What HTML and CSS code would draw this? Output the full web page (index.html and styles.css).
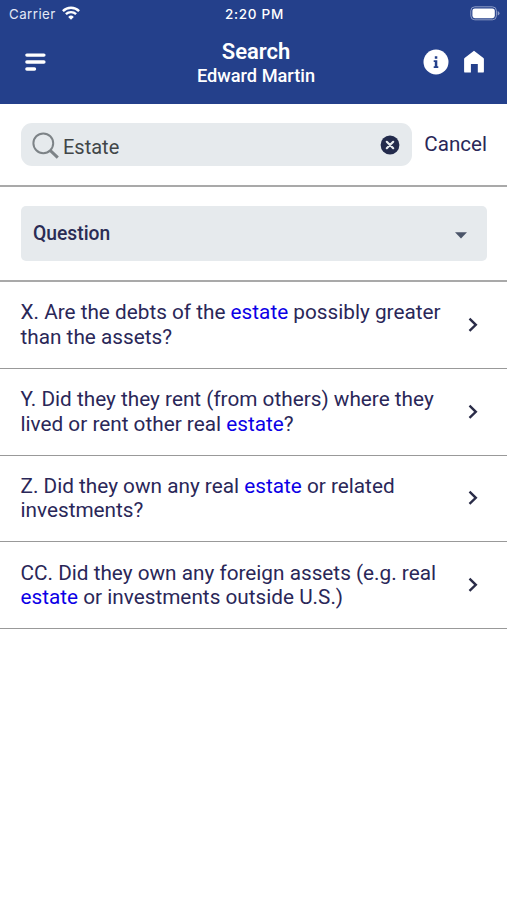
FILE: index.html
```html
<!DOCTYPE html>
<html lang="en">
<head>
<meta charset="utf-8">
<title>Search</title>
<link rel="stylesheet" href="styles.css">
</head>
<body>
<header class="header">
  <div class="status">
    <div class="carrier"><span>Carrier</span>
      <svg width="18" height="14" viewBox="0 0 18 14" fill="none" stroke="#fff" stroke-width="2.4"><path d="M.9 5.1a11.6 11.6 0 0 1 16.2 0"/><path d="M3.9 8.2a7.3 7.3 0 0 1 10.2 0"/><path d="M9 13.8 6.2 10.9a4 4 0 0 1 5.6 0z" fill="#fff" stroke="none"/></svg>
    </div>
    <div class="time">2:20 PM</div>
    <svg class="battery" width="31" height="15" viewBox="0 0 31 15"><rect x=".8" y=".8" width="25.6" height="13" rx="4" fill="none" stroke="#8e9cc7"/><rect x="2.4" y="2.4" width="22.4" height="9.8" rx="2.4" fill="#fff"/><path d="M27.7 5v4.6q1.8-.7 1.8-2.3T27.7 5z" fill="#8e9cc7"/></svg>
  </div>
  <div class="navbar">
    <svg width="21" height="18" viewBox="0 0 21 18" stroke="#fff" stroke-width="3.4" stroke-linecap="round"><path d="M1.9 2.1h17M1.9 9h17M1.9 16h7.6"/></svg>
    <div class="titles"><h1>Search</h1><p>Edward Martin</p></div>
    <div class="actions">
      <svg width="26" height="26" viewBox="0 0 26 26"><circle cx="13" cy="13" r="12.5" fill="#fff"/><path d="M11.8 7.2h2.5v2.5h-2.5zM10.7 11.3h3.6v6h1v1.6h-4.6v-1.6h1.1v-4.4h-1.1z" fill="#24408b"/></svg>
      <svg width="22" height="24" viewBox="0 0 22 24"><path d="M11 .8 20.4 8q.5.4.5 1v12.4q0 1.2-1.2 1.2h-4.9v-8.5H7.9v8.5H2.3q-1.2 0-1.2-1.2V9q0-.6.5-1z" fill="#fff"/></svg>
    </div>
  </div>
</header>
<main>
  <section class="search">
    <div class="field">
      <svg class="glass" width="28" height="28" viewBox="0 0 28 28" fill="none" stroke="#7d8387"><circle cx="11.3" cy="11.3" r="9.9" stroke-width="2"/><path d="m18.4 18.7 7.4 7" stroke-width="3"/></svg>
      <span class="query">Estate</span>
      <svg class="clear" width="20" height="20" viewBox="0 0 20 20"><circle cx="10" cy="10" r="9.4" fill="#232b4c"/><path d="m6.8 6.8 6.4 6.4m0-6.4-6.4 6.4" stroke="#e6eaed" stroke-width="2.2" stroke-linecap="round"/></svg>
    </div>
    <span class="cancel">Cancel</span>
  </section>
  <section class="filter">
    <div class="select"><span>Question</span><svg width="12" height="7" viewBox="0 0 12 7"><path d="M0 .3h12L6 6.5z" fill="#4b5569"/></svg></div>
  </section>
  <ul class="results">
    <li><p>X. Are the debts of the <mark>estate</mark> possibly greater<br>than the assets?</p><svg class="chevron" viewBox="0 0 10 16"><path d="m1.5 1.7 6.3 6.1-6.3 6.1"/></svg></li>
    <li><p>Y. Did they they rent (from others) where they<br>lived or rent other real <mark>estate</mark>?</p><svg class="chevron" viewBox="0 0 10 16"><path d="m1.5 1.7 6.3 6.1-6.3 6.1"/></svg></li>
    <li><p>Z. Did they own any real <mark>estate</mark> or related<br>investments?</p><svg class="chevron" viewBox="0 0 10 16"><path d="m1.5 1.7 6.3 6.1-6.3 6.1"/></svg></li>
    <li><p>CC. Did they own any foreign assets (e.g. real<br><mark>estate</mark> or investments outside U.S.)</p><svg class="chevron" viewBox="0 0 10 16"><path d="m1.5 1.7 6.3 6.1-6.3 6.1"/></svg></li>
  </ul>
</main>
</body>
</html>
```
FILE: styles.css
```css
* { box-sizing: border-box; margin: 0; padding: 0; }
body { width: 507px; min-height: 900px; background: #fff; color: #2a2758; font-family: Roboto, sans-serif; }
svg { display: block; flex: none; }
.header { height: 103.5px; background: #24408b; color: #fff; }
.status { height: 27px; display: grid; grid-template-columns: 1fr auto 1fr; align-items: center; padding: 0 7px 0 9px; font-family: Inter, sans-serif; font-size: 13.3px; }
.carrier { display: flex; align-items: center; gap: 6px; letter-spacing: .45px; color: #e3e8f6; }
.carrier svg { margin-top: -2px; }
.time { font-weight: 500; font-size: 13.5px; letter-spacing: .7px; }
.battery { justify-self: end; margin-right: -1px; }
.navbar { height: 76px; display: grid; grid-template-columns: 85px 1fr 85px; align-items: center; padding: 0 22px 0 25px; }
.navbar > svg { margin-top: -6px; }
.titles { text-align: center; margin-top: -3px; padding-left: 2px; white-space: nowrap; }
.titles h1 { font-size: 22px; line-height: 25px; font-weight: 600; }
.titles p { font-size: 18.2px; line-height: 24px; font-weight: 500; }
.actions { display: flex; align-items: center; justify-content: flex-end; gap: 14px; margin-top: -6px; }
.search { height: 83.5px; display: flex; align-items: center; padding: 0 20px 0 21px; border-bottom: 2px solid #a9a9a9; }
.field { width: 390.5px; height: 43px; display: flex; align-items: center; border-radius: 11px; background: #e6eaed; padding: 0 12px 0 11px; }
.glass { margin-top: 3px; }
.clear { margin-top: 1px; }
.query { flex: 1; margin: 5px 0 0 3px; font-size: 20px; color: #414648; }
.cancel { margin-left: auto; font-size: 20.6px; }
.filter { height: 95px; padding: 19px 20px 0 21px; border-bottom: 2px solid #a9a9a9; }
.select { height: 55px; display: flex; align-items: center; justify-content: space-between; padding: 0 20px 0 12px; border-radius: 5px; background: #e6eaed; font-size: 19.3px; font-weight: 500; color: #2a2c55; }
.select svg { margin-top: 3px; }
.results { list-style: none; }
.results li { height: 86.75px; display: flex; align-items: center; justify-content: space-between; padding: 0 29px 0 20.5px; border-bottom: 1.5px solid #999; }
.results p { font-size: 20.75px; line-height: 24.5px; white-space: nowrap; }
.results mark { background: none; color: #0c00e6; }
.chevron { width: 10px; height: 16px; fill: none; stroke: #2a2c48; stroke-width: 2.4; }
```
